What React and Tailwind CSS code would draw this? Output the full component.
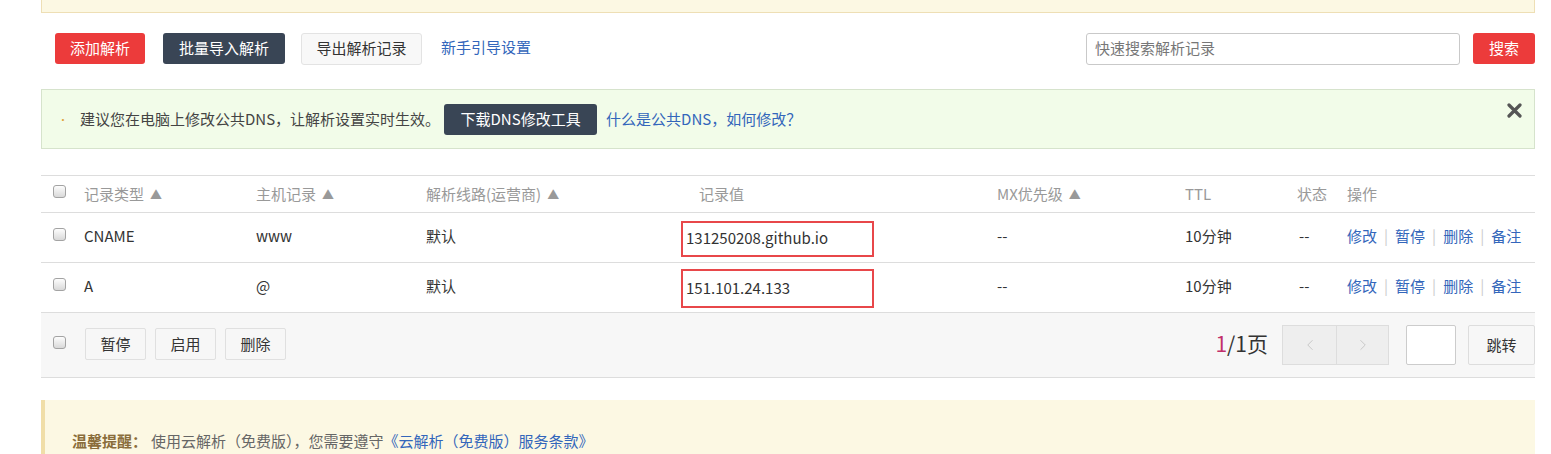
import { ChevronLeft, ChevronRight } from 'lucide-react';

const font = { fontFamily: '"Noto Sans CJK SC", "Noto Sans", sans-serif' };

function Checkbox() {
  return (
    <span className="inline-block w-[13px] h-[13px] rounded-[3px] border border-[#a3a3a3] bg-gradient-to-b from-[#fdfdfd] to-[#d9d9d9]" />
  );
}

function SortArrow() {
  return <span className="ml-[6px] text-[12px] text-[#999]">▲</span>;
}

const cols = 'grid grid-cols-[43px_172px_170px_255px_316px_188px_112px_50px_1fr] items-center';

const rows = [
  { type: 'CNAME', host: 'www', value: '131250208.github.io', boxH: 'h-[36px] mt-[2px]' },
  { type: 'A', host: '@', value: '151.101.24.133', boxH: 'h-[39px] mt-[2px]' },
];

function Ops() {
  const items = ['修改', '暂停', '删除', '备注'];
  return (
    <div className="flex items-center text-[#3366bb]">
      {items.map((t, i) => (
        <span key={t} className="flex items-center">
          {i > 0 && <span className="mx-[7px] text-[#ccc]">|</span>}
          <span>{t}</span>
        </span>
      ))}
    </div>
  );
}

export default function App() {
  return (
    <div className="bg-white w-[1551px] h-[454px] overflow-hidden text-[15px] text-[#333]" style={font}>
      <div className="ml-[41px] w-[1494px]">
        <div className="h-[13px] bg-[#fcf8e3] border-x border-b border-[#eedfb5]" />

        <div className="flex items-center mt-[20px] h-[31px] pl-[14px]">
          <button className="h-[31px] w-[90px] rounded-[3px] bg-[#ec3b3b] text-white">添加解析</button>
          <button className="ml-[18px] h-[31px] w-[122px] rounded-[3px] bg-[#394555] text-white">批量导入解析</button>
          <button className="ml-[16px] h-[32px] w-[121px] rounded-[3px] border border-[#e3e3e3] bg-[#f8f8f8] text-[#333]">导出解析记录</button>
          <a className="ml-[19px] text-[#3366bb] -mt-[2px]">新手引导设置</a>
          <div className="ml-auto flex items-center">
            <div className="w-[374px] h-[32px] border border-[#c9c9c9] rounded-[3px] flex items-center pl-[8px] text-[#777]">
              快速搜索解析记录
            </div>
            <button className="ml-[13px] h-[31px] w-[62px] rounded-[3px] bg-[#ec3b3b] text-white">搜索</button>
          </div>
        </div>

        <div className="mt-[25px] h-[60px] bg-[#f2fce9] border border-[#d6e3cc] flex items-center pl-[16px] pr-[12px]">
          <span className="text-[#e0a33c] text-[10px] mr-[12px]">•</span>
          <span className="text-[#444]">建议您在电脑上修改公共DNS，让解析设置实时生效。</span>
          <button className="ml-[4px] h-[31px] w-[153px] rounded-[3px] bg-[#394555] text-white text-[15px]">下载DNS修改工具</button>
          <a className="ml-[9px] text-[#3366bb]">什么是公共DNS，如何修改？</a>
          <svg className="ml-auto -mt-[18px]" width="15" height="15" viewBox="0 0 15 15">
            <path d="M2 2 L13 13 M13 2 L2 13" stroke="#555" strokeWidth="3.2" strokeLinecap="round" />
          </svg>
        </div>

        <div className="mt-[26px] border-t border-[#ddd]">
          <div className={`${cols} h-[37px] border-b border-[#ddd] text-[#999]`}>
            <div className="pl-[12px] -mt-[5px] flex"><Checkbox /></div>
            <div>记录类型<SortArrow /></div>
            <div>主机记录<SortArrow /></div>
            <div>解析线路(运营商)<SortArrow /></div>
            <div className="pl-[18px]">记录值</div>
            <div>MX优先级<SortArrow /></div>
            <div>TTL</div>
            <div>状态</div>
            <div>操作</div>
          </div>
          {rows.map((r) => (
            <div key={r.type} className={`${cols} h-[50px] border-b border-[#ddd]`}>
              <div className="pl-[12px] -mt-[7px] flex"><Checkbox /></div>
              <div className="-mt-[2px]">{r.type}</div>
              <div className="-mt-[2px]">{r.host}</div>
              <div className="-mt-[2px]">默认</div>
              <div>
                <div className={`${r.boxH} w-[193px] border-2 border-[#e8474a] flex items-center pl-[3px]`}>{r.value}</div>
              </div>
              <div className="-mt-[2px]">--</div>
              <div className="-mt-[2px]">10分钟</div>
              <div className="pl-[2px] -mt-[2px]">--</div>
              <div className="-mt-[2px]"><Ops /></div>
            </div>
          ))}
          <div className="h-[65px] bg-[#f7f7f7] border-b border-[#ddd] flex items-center">
            <div className="pl-[12px] w-[44px] -mt-[6px] flex"><Checkbox /></div>
            <div className="flex gap-[9px] -mt-[2px]">
              {['暂停', '启用', '删除'].map((t) => (
                <button key={t} className="h-[32px] w-[61px] rounded-[2px] border border-[#e0e0e0] bg-[#f7f7f7] text-[#333]">{t}</button>
              ))}
            </div>
            <div className="ml-auto flex items-center">
              <span className="text-[21px] text-[#333] -mt-[2px]"><span className="text-[#c2306b]">1</span>/1页</span>
              <div className="ml-[14px] flex">
                <button className="h-[40px] w-[55px] border border-[#ddd] bg-[#eee] flex items-center justify-center">
                  <ChevronLeft size={18} strokeWidth={1} color="#bbb" />
                </button>
                <button className="h-[40px] w-[52px] border border-l-0 border-[#ddd] bg-[#eee] flex items-center justify-center">
                  <ChevronRight size={18} strokeWidth={1} color="#bbb" />
                </button>
              </div>
              <div className="ml-[17px] h-[40px] w-[50px] border border-[#ccc] bg-white rounded-[2px]" />
              <button className="ml-[12px] h-[40px] w-[67px] border border-[#ddd] rounded-[2px] bg-[#f7f7f7] text-[#333]">跳转</button>
            </div>
          </div>
        </div>

        <div className="mt-[22px] h-[60px] bg-[#fcf8e3] border-l-4 border-[#f0dea8] pl-[27px] pt-[30px] text-[#666]">
          <span className="font-bold text-[#8a6d3b]">温馨提醒：</span>
          <span className="ml-[4px]">使用云解析（免费版），您需要遵守</span>
          <a className="text-[#3366bb]">《云解析（免费版）服务条款》</a>
        </div>
      </div>
    </div>
  );
}
